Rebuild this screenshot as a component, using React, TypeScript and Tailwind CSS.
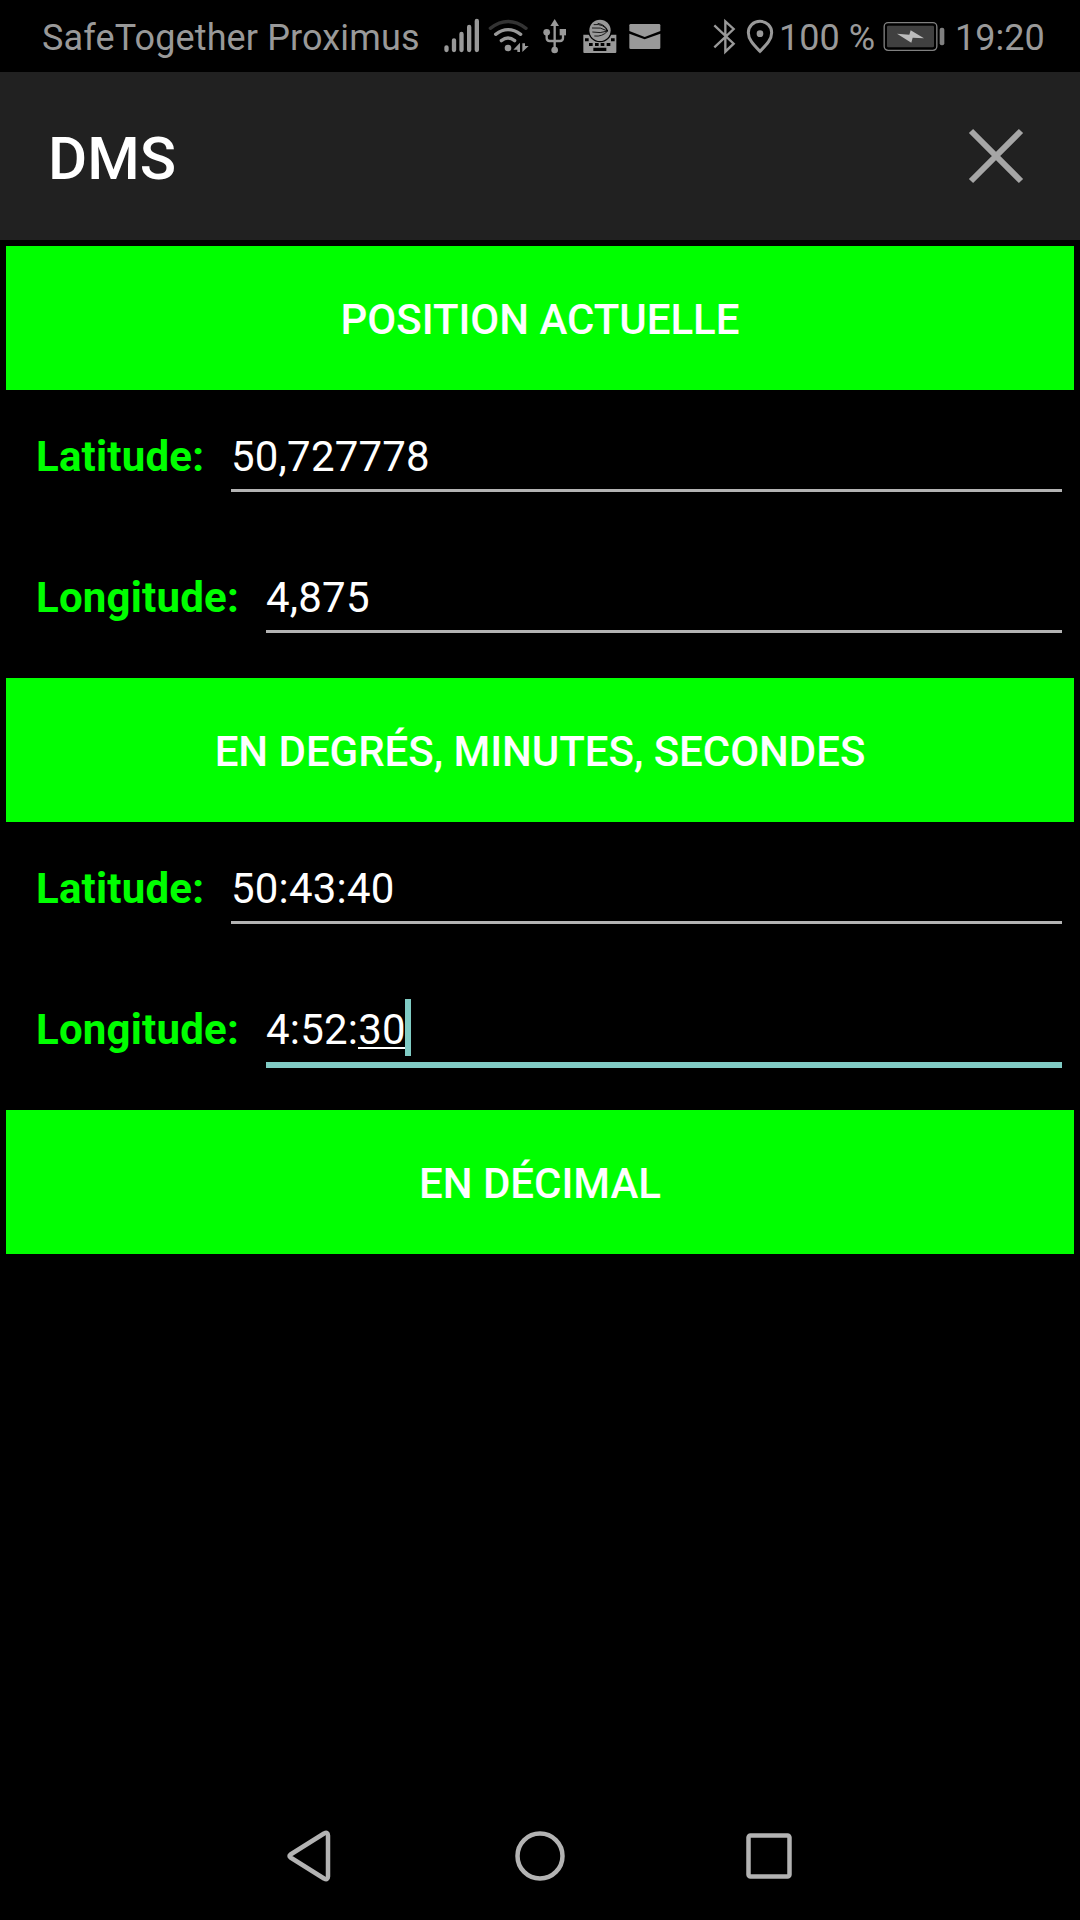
import type { ReactNode } from "react";

function SignalIcon() {
  return (
    <svg className="h-[72px] w-9 shrink-0" viewBox="42 0 108 216" fill="none" stroke="#999" strokeWidth="13" strokeLinecap="round">
      <path d="M49.500 142v8M72 121v29M94.500 102v48M117.500 81v69M140.500 63v87" />
    </svg>
  );
}

function WifiIcon() {
  return (
    <svg className="h-[72px] w-[42px] shrink-0" viewBox="174 0 126 216" fill="none" strokeWidth="10" strokeLinecap="round">
      <path d="M181 85q53-41 107 0" stroke="#333" />
      <path d="M197 103q37-28 75 0M214 122q20-16 40 0" stroke="#999" />
      <circle cx="234" cy="144" r="10" fill="#999" />
      <path d="M270 128v28h-8v-7h-12zM277 156v-26h8v8h11z" fill="#999" />
    </svg>
  );
}

function UsbIcon() {
  return (
    <svg className="h-[72px] w-6 shrink-0" viewBox="338 0 72 216" fill="#999">
      <path d="M373 57l13 21h-26z" />
      <circle cx="349" cy="97" r="10" />
      <path d="M388 87h19v19h-19z" />
      <circle cx="373" cy="150" r="10" />
      <path d="M373 74v72M349 100v14q0 9 9 9h31q9 0 9-9v-14" fill="none" stroke="#999" strokeWidth="7" />
    </svg>
  );
}

function KeyboardIcon() {
  return (
    <svg className="h-[72px] w-[34px] shrink-0" viewBox="458 0 102 216">
      <path d="M459 104h99v52q0 3-3 3h-93q-3 0-3-3z" fill="#999" />
      <circle cx="509" cy="91" r="36" fill="#000" />
      <circle cx="509" cy="91" r="32" fill="#999" />
      <path
        d="M490 74q30-4 42 19-16 18-40 15M502 70q24 4 30 23M485 84q26-4 47 9M486 96q24 5 46-3"
        fill="none"
        stroke="#000"
        strokeWidth="2.500"
      />
      <path d="M464 115h11v9h-11zM542 115h11v9h-11zM476 129h11v9h-11zM494 129h11v9h-11zM511 129h11v9h-11zM529 129h11v9h-11zM489 143h39v10h-39z" />
    </svg>
  );
}

function MailIcon() {
  return (
    <svg className="h-[72px] w-8 shrink-0" viewBox="596 0 96 216" fill="#999">
      <path d="M601 72h85q4 0 4 4v17l-47 18-46-18V76q0-4 4-4z" />
      <path d="M597 101l46 17 47-17v42q0 4-4 4h-85q-4 0-4-4z" />
    </svg>
  );
}

function BluetoothIcon() {
  return (
    <svg className="h-[72px] w-6 shrink-0" viewBox="69 0 72 216" fill="none" stroke="#999" strokeWidth="7">
      <path d="M73 76l58 55-25 24V64l25 23-58 55" />
    </svg>
  );
}

function LocationIcon() {
  return (
    <svg className="h-[72px] w-7 shrink-0" viewBox="168 0 84 216" fill="none" stroke="#999" strokeWidth="9">
      <path d="M210 64c-20 0-35 15-35 34 0 20 15 35 35 56 20-21 35-36 35-56 0-19-15-34-35-34z" />
      <circle cx="210" cy="101" r="10" fill="#999" stroke="none" />
    </svg>
  );
}

function BatteryIcon() {
  return (
    <svg className="h-[72px] w-[62px] shrink-0" viewBox="580 0 186 216">
      <rect x="583.500" y="68" width="158" height="83" rx="12" fill="none" stroke="#808080" strokeWidth="4" />
      <rect x="592" y="77" width="141" height="65" rx="4" fill="#404040" />
      <rect x="750" y="83" width="14" height="53" rx="6" fill="#808080" />
      <path d="M622 101l37 3 4-13 40 24-34-2-4 15z" fill="#bbb" />
    </svg>
  );
}

function StatusBar() {
  return (
    <div className="flex h-[72px] items-center whitespace-nowrap pl-[42px] text-[36px] leading-[72px] text-[#999]">
      <span className="w-[402px] pt-1 tracking-[0.13px]">SafeTogether Proximus</span>
      <SignalIcon />
      <span className="w-2" />
      <WifiIcon />
      <span className="w-[13px]" />
      <UsbIcon />
      <span className="w-4" />
      <KeyboardIcon />
      <span className="w-3" />
      <MailIcon />
      <span className="w-[52px]" />
      <BluetoothIcon />
      <span className="w-[9px]" />
      <LocationIcon />
      <span className="ml-[5px] w-[104px] pt-1">100 %</span>
      <BatteryIcon />
      <span className="ml-[10px] pt-1">19:20</span>
    </div>
  );
}

function ActionButton({ children }: { children: ReactNode }) {
  return (
    <button className="mx-1.5 flex h-36 items-center justify-center bg-[#00ff00] pt-[3px] text-[42px] font-medium uppercase tracking-[-0.03px]">
      {children}
    </button>
  );
}

type FieldProps = {
  label: string;
  children: ReactNode;
  wide?: boolean;
  focused?: boolean;
};

function Field({ label, children, wide, focused }: FieldProps) {
  return (
    <div className="flex h-[141px] items-start pl-9 pr-[18px] text-[42px] leading-[49px] tracking-[0.2px]">
      <span className={`shrink-0 pt-[42px] font-bold text-[#00ff00] ${wide ? "w-[230px]" : "w-[195px]"}`}>
        {label}
      </span>
      <div
        className={`grow pt-[42px] ${
          focused ? "h-[105px] border-b-6 border-[#80cbc4]" : "h-[102px] border-b-3 border-[#b3b3b3]"
        }`}
      >
        {children}
      </div>
    </div>
  );
}

export default function App() {
  return (
    <div className="flex h-[1920px] w-[1080px] flex-col overflow-hidden bg-black font-[Roboto,sans-serif] text-white">
      <StatusBar />

      <header className="flex h-[168px] items-center justify-between bg-[#212121] pl-12 pr-[56px]">
        <h1 className="pt-1.5 text-[60px] font-medium">DMS</h1>
        <svg className="size-14" viewBox="0 0 56 56" fill="none" stroke="#a6a6a6" strokeWidth="6">
          <path d="M3 3l50 50M53 3l-50 50" />
        </svg>
      </header>

      <main className="flex grow flex-col pt-1.5">
        <ActionButton>Position actuelle</ActionButton>
        <Field label="Latitude:">50,727778</Field>
        <Field label="Longitude:" wide>
          4,875
        </Field>

        <div className="h-1.5" />
        <ActionButton>En degrés, minutes, secondes</ActionButton>
        <Field label="Latitude:">50:43:40</Field>
        <Field label="Longitude:" wide focused>
          <span className="flex">
            4:52:
            <span className="relative">
              30
              <span className="absolute left-0 top-[42px] h-[2px] w-full bg-white" />
              <span className="absolute -right-[5px] -top-1.5 h-[57px] w-1.5 bg-[#80cbc4]" />
            </span>
          </span>
        </Field>

        <div className="h-1.5" />
        <ActionButton>En décimal</ActionButton>
      </main>

      <nav className="flex h-32 items-center justify-center">
        <svg className="h-16 w-[640px]" viewBox="0 0 640 64" fill="none" stroke="#b3b3b3" strokeWidth="4.500" strokeLinejoin="round">
          <path d="M70.500 30.500q-2 1.500 0 3l33.500 21q4 2 4-2V11.500q0-4-4-2z" />
          <circle cx="320" cy="32" r="22.500" />
          <rect x="528.500" y="11.500" width="41" height="41" rx="2" />
        </svg>
      </nav>
    </div>
  );
}
